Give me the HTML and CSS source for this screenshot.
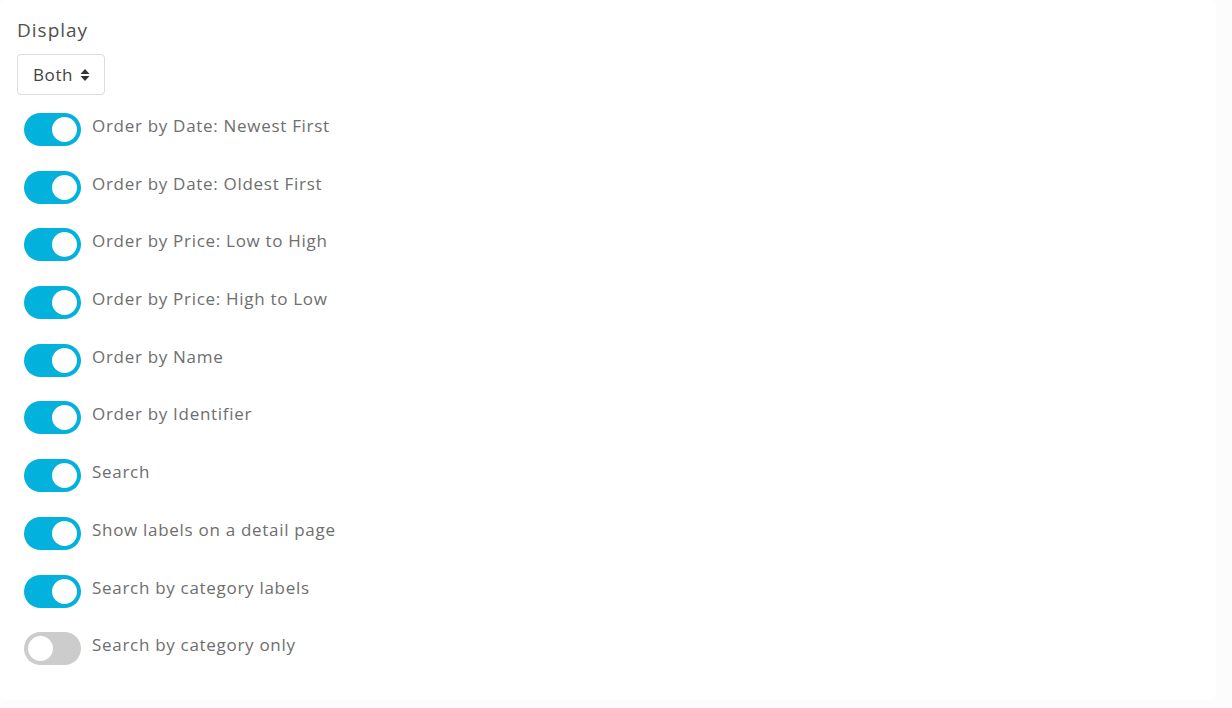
FILE: index.html
```html
<!DOCTYPE html>
<html lang="en">
<head>
  <meta charset="UTF-8" />
  <title>Display settings</title>
  <link rel="stylesheet" href="styles.css">
</head>
<body>
  <div class="card">
    <div class="field-label">Display</div>
    <div class="select">
      <span>Both</span>
      <svg class="caret" width="10" height="14" viewBox="0 0 10 14">
        <path d="M5 1 L9.5 6 H0.5 Z M5 13 L9.5 8 H0.5 Z" fill="#333"/>
      </svg>
    </div>

    <div class="options">
      <label class="option"><span class="switch on"></span><span class="text">Order by Date: Newest First</span></label>
      <label class="option"><span class="switch on"></span><span class="text">Order by Date: Oldest First</span></label>
      <label class="option"><span class="switch on"></span><span class="text">Order by Price: Low to High</span></label>
      <label class="option"><span class="switch on"></span><span class="text">Order by Price: High to Low</span></label>
      <label class="option"><span class="switch on"></span><span class="text">Order by Name</span></label>
      <label class="option"><span class="switch on"></span><span class="text">Order by Identifier</span></label>
      <label class="option"><span class="switch on"></span><span class="text">Search</span></label>
      <label class="option"><span class="switch on"></span><span class="text">Show labels on a detail page</span></label>
      <label class="option"><span class="switch on"></span><span class="text">Search by category labels</span></label>
      <label class="option"><span class="switch"></span><span class="text">Search by category only</span></label>
    </div>
  </div>
</body>
</html>
```

FILE: styles.css
```css
* { box-sizing: border-box; }
body {
  margin: 0;
  padding: 0;
  background: #fcfcfc;
  font-family: 'Open Sans', sans-serif;
  color: #666;
}

.card {
  background: white;
  width: 1216px;
  height: 700px;
  border-radius: 8px;
  padding: 17px 17px 0;
}

.field-label {
  font-size: 19px;
  letter-spacing: 1px;
  color: #505050;
  line-height: 26px;
  margin-bottom: 11px;
}

.select {
  display: inline-flex;
  align-items: center;
  gap: 7px;
  height: 41px;
  padding: 0 14px 0 15px;
  border: 1px solid #dcdcdc;
  border-radius: 4px;
  font-size: 17px;
  letter-spacing: 0.6px;
  color: #444;
}

.options {
  display: flex;
  flex-direction: column;
  gap: 24.7px;
  margin-top: 18px;
  padding-left: 7px;
}

.option {
  display: flex;
  align-items: flex-start;
  gap: 11px;
  height: 33px;
}

.text {
  font-size: 17px;
  line-height: 26px;
  letter-spacing: 0.7px;
  color: #6e6e6e;
}

.switch {
  position: relative;
  flex: none;
  width: 57px;
  height: 33px;
  border-radius: 17px;
  background: #cccccc;
}

.switch::after {
  content: "";
  position: absolute;
  top: 4px;
  left: 4px;
  width: 25px;
  height: 25px;
  border-radius: 50%;
  background: white;
}

.switch.on { background: #02b1dc; }
.switch.on::after { left: 28px; }
```
